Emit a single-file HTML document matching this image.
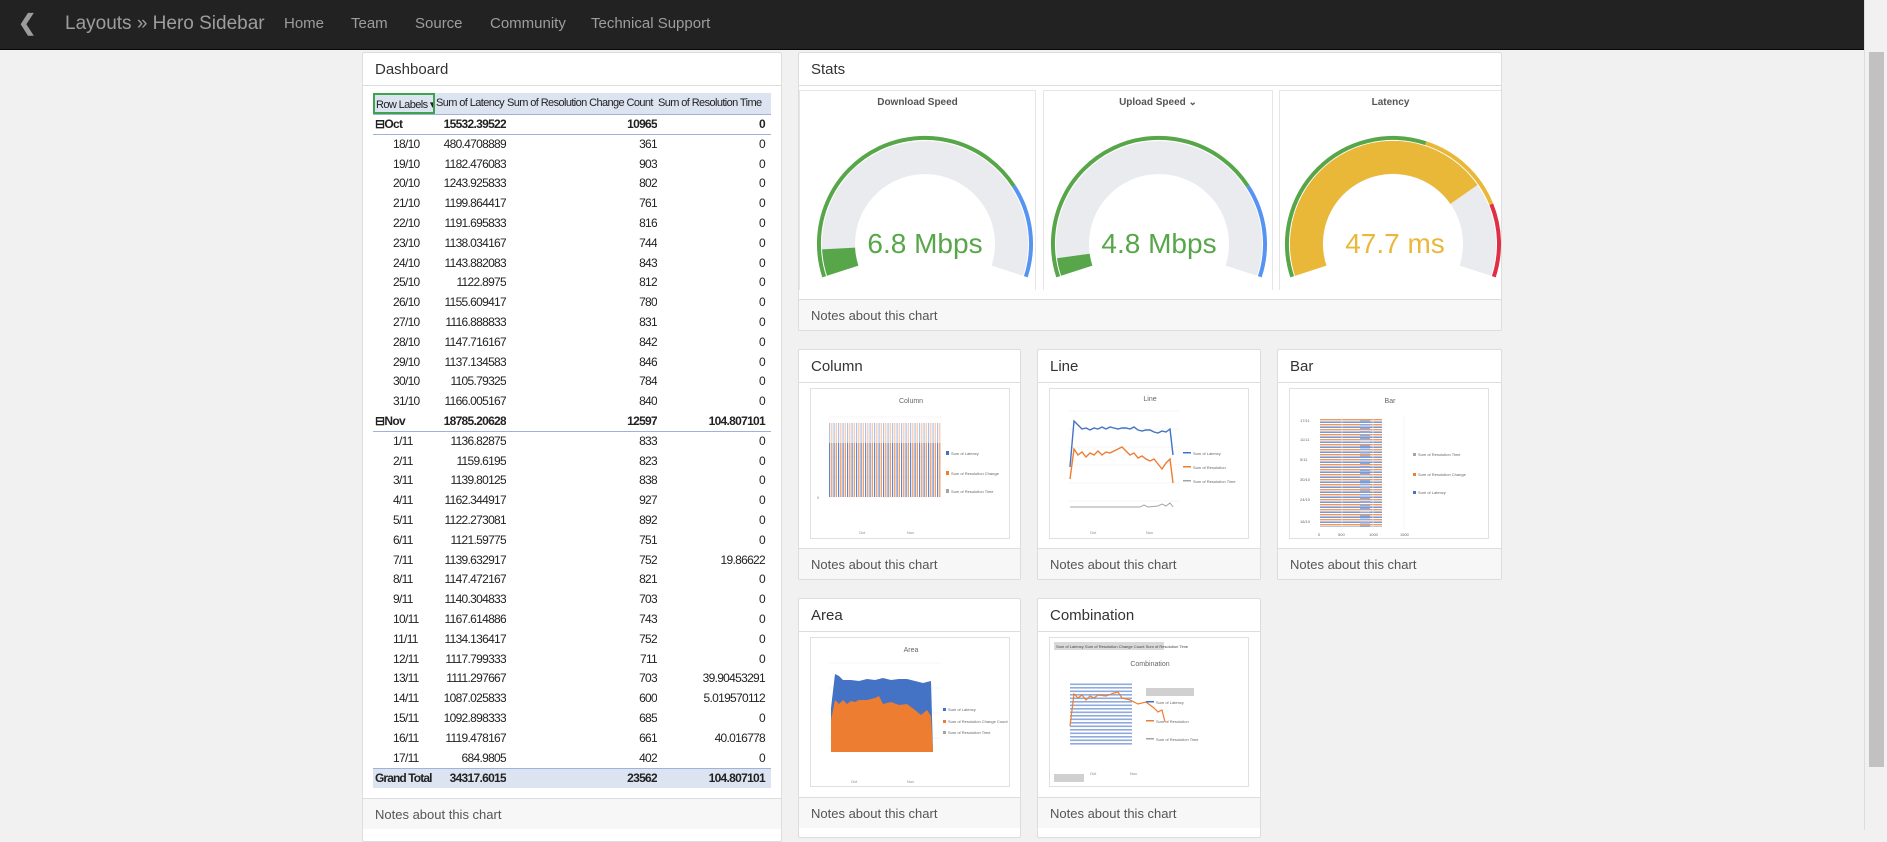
<!DOCTYPE html>
<html><head><meta charset="utf-8"><style>
*{box-sizing:border-box;margin:0;padding:0}
body{width:1887px;height:830px;overflow:hidden;background:#f1f1f1;font-family:"Liberation Sans",sans-serif;position:relative}
.nav{position:absolute;left:0;top:0;width:1887px;height:50px;background:#222;border-bottom:1px solid #080808}
.nav span{position:absolute;top:15px;color:#9d9d9d;font-size:15px}
.brand{font-size:19px!important;top:13px!important;color:#9d9d9d}
.sb{position:absolute;left:1864px;top:0;width:23px;height:830px;background:#f1f1f1;border-left:1px solid #ddd}
.sb i{position:absolute;left:4px;top:52px;width:15px;height:715px;background:#c1c1c1}
.panel{position:absolute;background:#fff;border:1px solid #ddd;border-radius:2px}
.ph{position:absolute;left:0;right:0;top:0;height:33px;border-bottom:1px solid #ddd;font-size:15px;color:#333;padding:8px 12px}
.pf{position:absolute;left:0;right:0;bottom:0;height:31px;border-top:1px solid #ddd;background:#f7f7f7;font-size:13px;color:#555;padding:8px 12px}
.tbl{position:absolute;left:373px;top:93px;width:398px;font-size:12px;letter-spacing:-.7px;color:#222}
.r{display:flex;height:19.8px;line-height:19.8px;white-space:nowrap}
.r div{overflow:hidden}
.c1{width:62px;padding-left:20px}.c2{width:71px;text-align:right}.c3{width:151px;text-align:right}.c4{width:111px;text-align:right;padding-right:3px}
.b{font-weight:bold}
.b .c1{padding-left:2px}
.hd{height:22px;line-height:20px;background:#dce3f1;border-bottom:1px solid #9fb3d9;font-size:11px;letter-spacing:-.6px}
.hd div{text-align:left!important;padding:0 1px!important}
.gc{position:absolute;top:90px;height:200px;background:#fff;border:1px solid #e6e6e6;border-bottom:none}
.gt{position:absolute;top:6px;left:0;right:0;text-align:center;font-size:10px;color:#555;font-weight:bold}
.th{position:absolute;border:1px solid #e0e0e0;background:#fff}
</style></head><body>
<div class="nav">
<span style="left:18px;top:10px;font-size:22px;font-weight:bold;color:#9d9d9d">&#10094;</span>
<span class="brand" style="left:65px">Layouts » Hero Sidebar</span>
<span style="left:284px">Home</span><span style="left:351px">Team</span><span style="left:415px">Source</span><span style="left:490px">Community</span><span style="left:591px">Technical Support</span>
</div>
<div class="sb"><i></i></div>

<div class="panel" style="left:362px;top:52px;width:420px;height:790px">
<div class="ph">Dashboard</div>
<div class="pf" style="bottom:12px">Notes about this chart</div>
</div>
<div class="tbl">
<div class="r hd"><div class="c1" style="border:2px solid #3fa34d;width:62px">Row Labels ▾</div><div class="c2" style="width:71px">Sum of Latency</div><div class="c3">Sum of Resolution Change Count</div><div class="c4">Sum of Resolution Time</div></div>
<div class="r b" style="border-bottom:1px solid #9fb3d9"><div class="c1">⊟Oct</div><div class="c2">15532.39522</div><div class="c3">10965</div><div class="c4">0</div></div>
<div class="r"><div class="c1">18/10</div><div class="c2">480.4708889</div><div class="c3">361</div><div class="c4">0</div></div>
<div class="r"><div class="c1">19/10</div><div class="c2">1182.476083</div><div class="c3">903</div><div class="c4">0</div></div>
<div class="r"><div class="c1">20/10</div><div class="c2">1243.925833</div><div class="c3">802</div><div class="c4">0</div></div>
<div class="r"><div class="c1">21/10</div><div class="c2">1199.864417</div><div class="c3">761</div><div class="c4">0</div></div>
<div class="r"><div class="c1">22/10</div><div class="c2">1191.695833</div><div class="c3">816</div><div class="c4">0</div></div>
<div class="r"><div class="c1">23/10</div><div class="c2">1138.034167</div><div class="c3">744</div><div class="c4">0</div></div>
<div class="r"><div class="c1">24/10</div><div class="c2">1143.882083</div><div class="c3">843</div><div class="c4">0</div></div>
<div class="r"><div class="c1">25/10</div><div class="c2">1122.8975</div><div class="c3">812</div><div class="c4">0</div></div>
<div class="r"><div class="c1">26/10</div><div class="c2">1155.609417</div><div class="c3">780</div><div class="c4">0</div></div>
<div class="r"><div class="c1">27/10</div><div class="c2">1116.888833</div><div class="c3">831</div><div class="c4">0</div></div>
<div class="r"><div class="c1">28/10</div><div class="c2">1147.716167</div><div class="c3">842</div><div class="c4">0</div></div>
<div class="r"><div class="c1">29/10</div><div class="c2">1137.134583</div><div class="c3">846</div><div class="c4">0</div></div>
<div class="r"><div class="c1">30/10</div><div class="c2">1105.79325</div><div class="c3">784</div><div class="c4">0</div></div>
<div class="r"><div class="c1">31/10</div><div class="c2">1166.005167</div><div class="c3">840</div><div class="c4">0</div></div>
<div class="r b" style="border-bottom:1px solid #9fb3d9"><div class="c1">⊟Nov</div><div class="c2">18785.20628</div><div class="c3">12597</div><div class="c4">104.807101</div></div>
<div class="r"><div class="c1">1/11</div><div class="c2">1136.82875</div><div class="c3">833</div><div class="c4">0</div></div>
<div class="r"><div class="c1">2/11</div><div class="c2">1159.6195</div><div class="c3">823</div><div class="c4">0</div></div>
<div class="r"><div class="c1">3/11</div><div class="c2">1139.80125</div><div class="c3">838</div><div class="c4">0</div></div>
<div class="r"><div class="c1">4/11</div><div class="c2">1162.344917</div><div class="c3">927</div><div class="c4">0</div></div>
<div class="r"><div class="c1">5/11</div><div class="c2">1122.273081</div><div class="c3">892</div><div class="c4">0</div></div>
<div class="r"><div class="c1">6/11</div><div class="c2">1121.59775</div><div class="c3">751</div><div class="c4">0</div></div>
<div class="r"><div class="c1">7/11</div><div class="c2">1139.632917</div><div class="c3">752</div><div class="c4">19.86622</div></div>
<div class="r"><div class="c1">8/11</div><div class="c2">1147.472167</div><div class="c3">821</div><div class="c4">0</div></div>
<div class="r"><div class="c1">9/11</div><div class="c2">1140.304833</div><div class="c3">703</div><div class="c4">0</div></div>
<div class="r"><div class="c1">10/11</div><div class="c2">1167.614886</div><div class="c3">743</div><div class="c4">0</div></div>
<div class="r"><div class="c1">11/11</div><div class="c2">1134.136417</div><div class="c3">752</div><div class="c4">0</div></div>
<div class="r"><div class="c1">12/11</div><div class="c2">1117.799333</div><div class="c3">711</div><div class="c4">0</div></div>
<div class="r"><div class="c1">13/11</div><div class="c2">1111.297667</div><div class="c3">703</div><div class="c4">39.90453291</div></div>
<div class="r"><div class="c1">14/11</div><div class="c2">1087.025833</div><div class="c3">600</div><div class="c4">5.019570112</div></div>
<div class="r"><div class="c1">15/11</div><div class="c2">1092.898333</div><div class="c3">685</div><div class="c4">0</div></div>
<div class="r"><div class="c1">16/11</div><div class="c2">1119.478167</div><div class="c3">661</div><div class="c4">40.016778</div></div>
<div class="r"><div class="c1">17/11</div><div class="c2">684.9805</div><div class="c3">402</div><div class="c4">0</div></div>
<div class="r b" style="background:#dce3f1;border-top:1px solid #9fb3d9"><div class="c1" style="letter-spacing:-.9px">Grand Total</div><div class="c2">34317.6015</div><div class="c3">23562</div><div class="c4">104.807101</div></div>
</div>

<div class="panel" style="left:798px;top:52px;width:704px;height:279px;overflow:hidden">
<div class="ph">Stats</div>
<div class="pf">Notes about this chart</div>
</div>

<div class="gc" style="left:799px;width:237px"><div class="gt">Download Speed</div>
<svg width="237" height="200" style="position:absolute;left:0;top:0">
<path d="M42.7 179.7 A86.5 86.5 0 1 1 207.3 179.7" fill="none" stroke="#e9ebef" stroke-width="33"/>
<path d="M42.7 179.7 A86.5 86.5 0 0 1 38.6 157.5" fill="none" stroke="#58a64a" stroke-width="33"/>
<path d="M24.2 185.8 A106 106 0 0 1 213.9 95.2" fill="none" stroke="#58a64a" stroke-width="4"/>
<path d="M213.9 95.2 A106 106 0 0 1 225.8 185.8" fill="none" stroke="#5794f2" stroke-width="4"/>
<text x="125" y="162" text-anchor="middle" font-size="28" fill="#58a64a" font-family="Liberation Sans">6.8 Mbps</text>
</svg></div>

<div class="gc" style="left:1043px;width:230px"><div class="gt">Upload Speed ⌄</div>
<svg width="230" height="200" style="position:absolute;left:0;top:0">
<g transform="translate(-10,0)">
<path d="M42.7 179.7 A86.5 86.5 0 1 1 207.3 179.7" fill="none" stroke="#e9ebef" stroke-width="33"/>
<path d="M42.7 179.7 A86.5 86.5 0 0 1 39.3 165" fill="none" stroke="#58a64a" stroke-width="33"/>
<path d="M24.2 185.8 A106 106 0 0 1 213.9 95.2" fill="none" stroke="#58a64a" stroke-width="4"/>
<path d="M213.9 95.2 A106 106 0 0 1 225.8 185.8" fill="none" stroke="#5794f2" stroke-width="4"/>
<text x="125" y="162" text-anchor="middle" font-size="28" fill="#58a64a" font-family="Liberation Sans">4.8 Mbps</text>
</g></svg></div>

<div class="gc" style="left:1279px;width:222px;border-right:none"><div class="gt">Latency</div>
<svg width="222" height="200" style="position:absolute;left:0;top:0">
<g transform="translate(-12,0)">
<path d="M42.7 179.7 A86.5 86.5 0 1 1 207.3 179.7" fill="none" stroke="#e9ebef" stroke-width="33"/>
<path d="M42.7 179.7 A86.5 86.5 0 0 1 195.9 103.4" fill="none" stroke="#eab839" stroke-width="33"/>
<path d="M24.2 185.8 A106 106 0 0 1 157.8 52.2" fill="none" stroke="#58a64a" stroke-width="4"/>
<path d="M157.8 52.2 A106 106 0 0 1 223.3 113.3" fill="none" stroke="#eab839" stroke-width="4"/>
<path d="M223.3 113.3 A106 106 0 0 1 225.8 185.8" fill="none" stroke="#e02f44" stroke-width="4"/>
<text x="127" y="162" text-anchor="middle" font-size="28" fill="#eab839" font-family="Liberation Sans">47.7 ms</text>
</g></svg></div>

<svg width="0" height="0" style="position:absolute"><defs>
<pattern id="vb" width="4.5" height="10" patternUnits="userSpaceOnUse"><rect x="0" width="1.2" height="10" fill="#4472c4"/><rect x="2.2" width="1.2" height="10" fill="#ed7d31"/></pattern>
<pattern id="hb" width="10" height="5" patternUnits="userSpaceOnUse"><rect y="0" width="10" height="1.4" fill="#ed7d31"/><rect y="2.5" width="10" height="1.4" fill="#4472c4"/></pattern>
<pattern id="hb2" width="10" height="3.5" patternUnits="userSpaceOnUse"><rect y="0" width="10" height="1.6" fill="#8faadc"/></pattern>
</defs></svg>

<!-- Column -->
<div class="panel" style="left:798px;top:349px;width:223px;height:231px">
<div class="ph">Column</div><div class="pf">Notes about this chart</div>
<div class="th" style="left:11px;top:38px;width:200px;height:151px">
<svg width="198" height="149"><text x="100" y="14" font-size="7" fill="#666" text-anchor="middle">Column</text>
<g stroke="#eee" stroke-width=".6"><line x1="18" y1="28" x2="130" y2="28"/><line x1="18" y1="48" x2="130" y2="48"/><line x1="18" y1="68" x2="130" y2="68"/><line x1="18" y1="88" x2="130" y2="88"/><line x1="18" y1="108" x2="130" y2="108"/></g>
<rect x="18" y="34" width="112" height="74" fill="url(#vb)" opacity=".85"/>
<rect x="18" y="34" width="112" height="20" fill="#fff" opacity=".5"/>
<text x="6" y="110" font-size="4" fill="#888">0</text>
<g font-size="4" fill="#888"><text x="48" y="145">Oct</text><text x="96" y="145">Nov</text></g>
<g fill="#666" font-size="4"><rect x="135" y="62" width="3" height="4" fill="#4472c4"/><text x="140" y="66">Sum of Latency</text><rect x="135" y="82" width="3" height="4" fill="#ed7d31"/><text x="140" y="86">Sum of Resolution Change</text><rect x="135" y="100" width="3" height="4" fill="#a5a5a5"/><text x="140" y="104">Sum of Resolution Time</text></g>
</svg></div></div>

<!-- Line -->
<div class="panel" style="left:1037px;top:349px;width:224px;height:231px">
<div class="ph">Line</div><div class="pf">Notes about this chart</div>
<div class="th" style="left:11px;top:38px;width:200px;height:151px">
<svg width="198" height="149"><text x="100" y="12" font-size="7" fill="#666" text-anchor="middle">Line</text>
<g stroke="#eee" stroke-width=".6"><line x1="18" y1="22" x2="130" y2="22"/><line x1="18" y1="40" x2="130" y2="40"/><line x1="18" y1="58" x2="130" y2="58"/><line x1="18" y1="76" x2="130" y2="76"/><line x1="18" y1="94" x2="130" y2="94"/><line x1="18" y1="112" x2="130" y2="112"/></g>
<polyline points="20,78 24,32 28,36 32,40 36,39 40,41 44,39 48,40 52,38 56,40 60,38 64,39 68,40 72,39 76,39 80,40 84,38 88,41 92,42 96,41 100,41 104,43 108,44 112,42 116,43 120,40 123,66" fill="none" stroke="#4472c4" stroke-width="1.4"/>
<polyline points="20,90 24,60 28,66 32,63 36,68 40,64 44,66 48,62 52,66 56,63 60,64 64,62 68,60 72,58 76,62 80,66 84,64 88,69 92,67 96,70 100,72 104,70 108,75 112,80 116,74 120,70 123,94" fill="none" stroke="#ed7d31" stroke-width="1.4"/>
<polyline points="20,118 90,118 94,116 98,118 108,117 112,115 116,117 120,114 123,118" fill="none" stroke="#a5a5a5" stroke-width="1"/>
<g font-size="4" fill="#888"><text x="40" y="145">Oct</text><text x="96" y="145">Nov</text></g>
<g fill="#666" font-size="4"><rect x="133" y="63" width="8" height="1.5" fill="#4472c4"/><text x="143" y="66">Sum of Latency</text><rect x="133" y="77" width="8" height="1.5" fill="#ed7d31"/><text x="143" y="80">Sum of Resolution</text><rect x="133" y="91" width="8" height="1.5" fill="#a5a5a5"/><text x="143" y="94">Sum of Resolution Time</text></g>
</svg></div></div>

<!-- Bar -->
<div class="panel" style="left:1277px;top:349px;width:225px;height:231px">
<div class="ph">Bar</div><div class="pf">Notes about this chart</div>
<div class="th" style="left:11px;top:38px;width:200px;height:151px">
<svg width="198" height="149"><text x="100" y="14" font-size="7" fill="#666" text-anchor="middle">Bar</text>
<rect x="30" y="30" width="62" height="108" fill="url(#hb)" opacity=".8"/>
<rect x="70" y="30" width="10" height="108" fill="url(#hb2)"/>
<g stroke="#eee" stroke-width=".6"><line x1="52" y1="26" x2="52" y2="140"/><line x1="83" y1="26" x2="83" y2="140"/><line x1="114" y1="26" x2="114" y2="140"/></g>
<g font-size="4" fill="#666"><text x="10" y="33">17/11</text><text x="10" y="52">11/11</text><text x="10" y="72">5/11</text><text x="10" y="92">30/10</text><text x="10" y="112">24/10</text><text x="10" y="134">18/10</text><text x="28" y="147">0</text><text x="48" y="147">500</text><text x="79" y="147">1000</text><text x="110" y="147">1500</text>
<rect x="123" y="64" width="3" height="3" fill="#a5a5a5"/><text x="128" y="67">Sum of Resolution Time</text><rect x="123" y="84" width="3" height="3" fill="#ed7d31"/><text x="128" y="87">Sum of Resolution Change</text><rect x="123" y="102" width="3" height="3" fill="#4472c4"/><text x="128" y="105">Sum of Latency</text></g>
</svg></div></div>

<!-- Area -->
<div class="panel" style="left:798px;top:598px;width:223px;height:240px">
<div class="ph">Area</div><div class="pf" style="bottom:9px">Notes about this chart</div>
<div class="th" style="left:11px;top:38px;width:200px;height:150px">
<svg width="198" height="148"><text x="100" y="14" font-size="7" fill="#666" text-anchor="middle">Area</text>
<g stroke="#eee" stroke-width=".6"><line x1="18" y1="25" x2="130" y2="25"/><line x1="18" y1="50" x2="130" y2="50"/><line x1="18" y1="75" x2="130" y2="75"/><line x1="18" y1="100" x2="130" y2="100"/></g>
<polygon points="20,114 20,70 24,36 28,38 32,42 40,42 48,43 56,41 64,42 72,40 80,42 88,41 96,41 104,43 112,45 116,44 120,43 122,114" fill="#4472c4"/>
<polygon points="20,114 20,82 24,62 28,66 32,62 36,66 40,63 44,64 48,62 56,62 64,60 68,58 72,66 80,64 88,67 96,66 104,72 110,77 116,72 120,78 122,114" fill="#ed7d31"/>
<g font-size="4" fill="#888"><text x="40" y="145">Oct</text><text x="96" y="145">Nov</text></g>
<g fill="#666" font-size="4"><rect x="132" y="70" width="3" height="3" fill="#4472c4"/><text x="137" y="73">Sum of Latency</text><rect x="132" y="82" width="3" height="3" fill="#ed7d31"/><text x="137" y="85">Sum of Resolution Change Count</text><rect x="132" y="93" width="3" height="3" fill="#a5a5a5"/><text x="137" y="96">Sum of Resolution Time</text></g>
</svg></div></div>

<!-- Combination -->
<div class="panel" style="left:1037px;top:598px;width:224px;height:240px">
<div class="ph">Combination</div><div class="pf" style="bottom:9px">Notes about this chart</div>
<div class="th" style="left:11px;top:38px;width:200px;height:150px">
<svg width="198" height="148"><rect x="4" y="4" width="110" height="8" fill="#d9d9d9"/><text x="6" y="10" font-size="4" fill="#444">Sum of Latency  Sum of Resolution Change Count  Sum of Resolution Time</text>
<text x="100" y="28" font-size="7" fill="#666" text-anchor="middle">Combination</text>
<rect x="20" y="45" width="62" height="62" fill="url(#hb2)"/>
<polyline points="20,88 24,56 28,60 32,57 36,62 40,58 44,60 48,57 56,58 64,55 68,54 72,60 80,62 88,66 96,64 104,70 108,74 112,72 115,84" fill="none" stroke="#ed7d31" stroke-width="1.2"/>
<g font-size="4" fill="#888"><text x="40" y="137">Oct</text><text x="80" y="137">Nov</text></g>
<rect x="96" y="50" width="48" height="8" fill="#d0d0d0"/>
<g fill="#666" font-size="4"><rect x="96" y="63" width="8" height="1.5" fill="#4472c4"/><text x="106" y="66">Sum of Latency</text><rect x="96" y="82" width="8" height="1.5" fill="#ed7d31"/><text x="106" y="85">Sum of Resolution</text><rect x="96" y="100" width="8" height="1.5" fill="#a5a5a5"/><text x="106" y="103">Sum of Resolution Time</text></g>
<rect x="4" y="136" width="30" height="8" fill="#d0d0d0"/>
</svg></div></div>
</body></html>
